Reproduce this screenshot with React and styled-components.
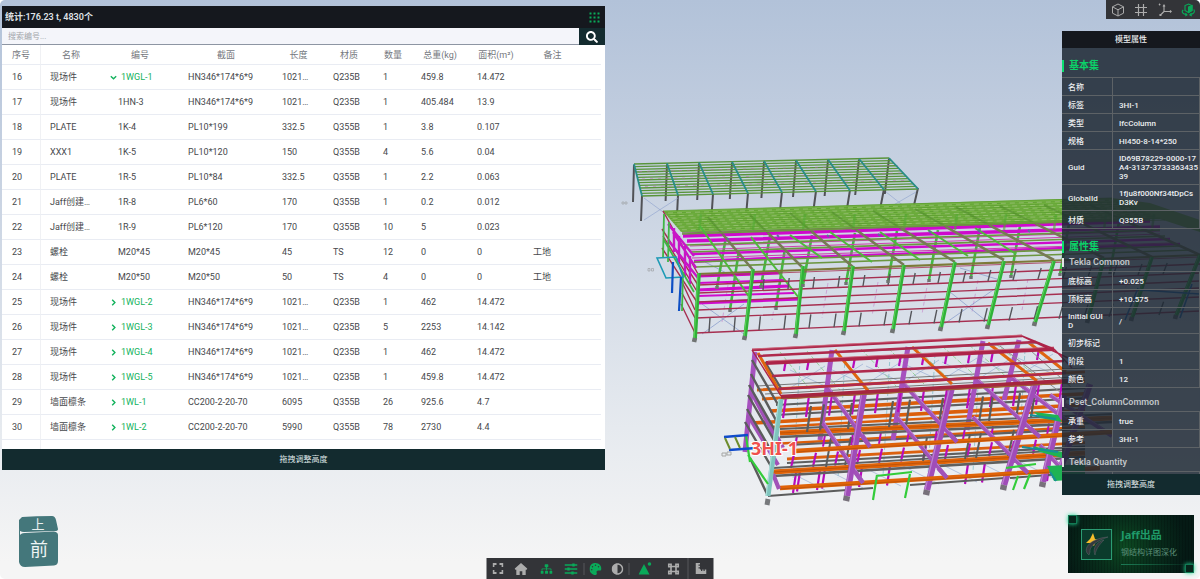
import React from 'react';
import styled, { createGlobalStyle } from 'styled-components';
import { FaHome, FaSitemap, FaPalette, FaAdjust, FaSearch, FaRulerCombined } from 'react-icons/fa';

const Global = createGlobalStyle`
  * { box-sizing: border-box; }
  body {
    margin: 0;
    background: #fff;
    font-family: Roboto, "Noto Sans CJK SC", sans-serif;
  }
  button { border: 0; padding: 0; margin: 0; font: inherit; cursor: pointer; }
`;

const GREEN = '#0aa959';

const Page = styled.div`
  position: relative;
  min-height: 100vh;
  overflow: hidden;
  border-radius: 5px;
  background: linear-gradient(#b2c2d9 0%, #c9d3e2 33%, #e6eaef 74%, #f5f5f5 97%);
`;
const SceneSvg = styled.svg`
  position: absolute;
  inset: 0;
  width: 100%;
  height: 100%;
`;
const Overlay = styled.div`
  position: relative;
  display: flex;
  justify-content: space-between;
  min-height: 100vh;
`;
const LeftColumn = styled.div`
  display: flex;
  flex-direction: column;
  flex: 0 0 50.25%;
  margin-left: 2px;
  padding: 6px 0 10px;
`;
const RightColumn = styled.aside`
  display: flex;
  flex-direction: column;
  align-items: flex-end;
  width: 138px;
`;

/* parts list */
const ListPanel = styled.section`
  background: #fff;
`;
const PanelBar = styled.header`
  display: flex;
  align-items: center;
  justify-content: space-between;
  height: 22px;
  padding: 0 5px 0 3px;
  background: #15181e;
`;
const Stats = styled.h1`
  margin: 0;
  font-size: 9px;
  line-height: 12px;
  font-weight: 600;
  color: #dfe1e5;
`;
const DotsButton = styled.button`
  display: flex;
  background: none;
`;
const SearchForm = styled.form`
  display: flex;
  height: 17px;
`;
const SearchInput = styled.input`
  flex: 1;
  min-width: 0;
  border: 0;
  border-bottom: 1px solid #8d95a3;
  padding: 2px 6px 0;
  background: #f4f5fa;
  font: 8px/12px Roboto, "Noto Sans CJK SC", sans-serif;
  outline: none;
  &::placeholder { color: #a3a5aa; }
`;
const SearchButton = styled.button`
  display: flex;
  align-items: center;
  justify-content: center;
  width: 26px;
  background: #132b2f;
  color: #fff;
  font-size: 12px;
`;
const ListScroll = styled.div`
  height: 404px;
  overflow: hidden;
  padding-right: 4px;
`;
const PartsTable = styled.table`
  width: 100%;
  table-layout: fixed;
  border-collapse: separate;
  border-spacing: 0;
  font-size: 9px;
  line-height: 12px;
  color: #46484c;
`;
const HeadCell = styled.th`
  height: 20px;
  padding: 0;
  border-bottom: 1px solid #e9ecf3;
  font-weight: 400;
  color: #75787e;
  text-align: center;
  white-space: nowrap;
  &:first-child { border-right: 1px solid #f0f1f4; }
`;
const Cell = styled.td`
  height: 25px;
  padding: 0 0 0 ${p => (p.$indent ? 17 : 9)}px;
  border-bottom: 1px solid #e9ecf3;
  white-space: nowrap;
  overflow: hidden;
  &:first-child { padding-left: 10px; border-right: 1px solid #f0f1f4; }
`;
const Assembly = styled.button`
  display: flex;
  align-items: center;
  gap: 4px;
  margin-left: -8px;
  background: none;
  color: #12b25c;
  font-size: 9px;
  line-height: 12px;
`;
const DragBar = styled.button`
  display: block;
  width: 100%;
  height: 21px;
  background: #132b2f;
  color: #dfe5e6;
  font-size: 8px;
  line-height: 21px;
  text-align: center;
`;
const CubeSvg = styled.svg`
  display: block;
  margin: auto 0 0 14px;
`;

/* tool bars */
const ViewTools = styled.nav`
  display: flex;
  align-items: center;
  justify-content: space-around;
  width: 94px;
  height: 19px;
  background: #333438;
`;
const ToolButton = styled.button`
  display: flex;
  align-items: center;
  justify-content: center;
  width: ${p => p.$w || 25}px;
  height: 100%;
  background: none;
  color: ${p => (p.$on ? GREEN : '#acacac')};
  font-size: 12px;
`;
const BottomTools = styled.nav`
  position: absolute;
  bottom: 0;
  left: 50%;
  transform: translateX(-50%);
  display: flex;
  align-items: center;
  height: 21px;
  background: #333438;
`;
const Divider = styled.span`
  width: 1px;
  height: ${p => (p.$full ? 21 : 12)}px;
  background: #56575b;
`;

/* model properties */
const PropPanel = styled.section`
  width: 100%;
  margin-top: 12px;
  background: rgba(28, 39, 50, 0.85);
  color: #eceef0;
`;
const PropTitle = styled.h2`
  margin: 0;
  height: 17px;
  background: #15181e;
  font-size: 8px;
  line-height: 18px;
  font-weight: 500;
  text-align: center;
`;
const PropScroll = styled.div`
  height: 426px;
  overflow: hidden;
`;
const SetHeading = styled.h3`
  margin: 12px 0 5px;
  border-left: 2px solid #0be070;
  padding-left: 5px;
  font-size: 10px;
  line-height: 12px;
  font-weight: 700;
  color: #0bd168;
`;
const GroupHeading = styled.h4`
  margin: ${p => (p.$first ? 3 : 10)}px 0 4px;
  border-left: 2px solid #e4e4e4;
  padding-left: 5px;
  font-size: 9px;
  line-height: 9px;
  font-weight: 600;
  color: #c0c4c8;
`;
const PropTable = styled.table`
  width: 100%;
  table-layout: fixed;
  border-collapse: separate;
  border-spacing: 0;
  border-top: 1px solid #5d6266;
  font-size: 8px;
  line-height: 9px;
  font-weight: 500;
  word-break: break-all;
`;
const PropLabel = styled.th`
  width: 51px;
  height: 18px;
  padding: 4px 6px 3px;
  border-right: 1px solid #5d6266;
  border-bottom: 1px solid #5d6266;
  font-weight: 500;
  text-align: left;
`;
const PropValue = styled.td`
  height: 18px;
  padding: 4px 1px 3px 6px;
  border-right: 1px solid #5d6266;
  border-bottom: 1px solid #5d6266;
`;

/* brand card */
const BrandCard = styled.a`
  position: relative;
  display: flex;
  align-items: center;
  gap: 9px;
  width: 126px;
  height: 58px;
  margin: auto 6px 6px 0;
  padding-left: 13px;
  text-decoration: none;
  background:
    repeating-linear-gradient(90deg, rgba(0, 0, 0, 0.16) 0 1px, transparent 1px 3px),
    radial-gradient(circle at 45% 55%, #0d4a22 0%, #08301c 35%, #051a15 80%);
`;
const Corner = styled.i`
  position: absolute;
  width: 9px;
  height: 9px;
  border: 1px solid #127a55;
  background: #06251b;
  box-shadow: 0 0 4px #1fdc95;
  ${p => (p.$end ? 'right: 0; bottom: 0;' : 'left: 0; top: 0;')}
`;
const BrandText = styled.div`
  flex: 1;
  padding-top: 3px;
  font-family: "Noto Sans", "Noto Sans CJK SC", sans-serif;
`;
const BrandName = styled.strong`
  display: block;
  font-size: 11px;
  line-height: 16px;
  color: #1f9a69;
`;
const BrandSub = styled.span`
  display: block;
  margin-top: 3px;
  font-size: 8px;
  line-height: 12px;
  color: #5c9079;
  white-space: nowrap;
`;
const BrandLine = styled.span`
  display: block;
  height: 1px;
  margin-top: 6px;
  background: linear-gradient(90deg, #1c7a55, transparent);
`;

const columns = [39, 60, 78, 94, 51, 50, 38, 56, 56, 57];
const heads = ['序号', '名称', '编号', '截面', '长度', '材质', '数量', '总重(kg)', '面积(m²)', '备注'];
const rows = [
  ['16', '现场件', '1WGL-1', 'HN346*174*6*9', '1021…', 'Q235B', '1', '459.8', '14.472', '', 'open'],
  ['17', '现场件', '1HN-3', 'HN346*174*6*9', '1021…', 'Q235B', '1', '405.484', '13.9', ''],
  ['18', 'PLATE', '1K-4', 'PL10*199', '332.5', 'Q355B', '1', '3.8', '0.107', ''],
  ['19', 'XXX1', '1K-5', 'PL10*120', '150', 'Q355B', '4', '5.6', '0.04', ''],
  ['20', 'PLATE', '1R-5', 'PL10*84', '332.5', 'Q355B', '1', '2.2', '0.063', ''],
  ['21', 'Jaff创建…', '1R-8', 'PL6*60', '170', 'Q355B', '1', '0.2', '0.012', ''],
  ['22', 'Jaff创建…', '1R-9', 'PL6*120', '170', 'Q355B', '10', '5', '0.023', ''],
  ['23', '螺栓', 'M20*45', 'M20*45', '45', 'TS', '12', '0', '0', '工地'],
  ['24', '螺栓', 'M20*50', 'M20*50', '50', 'TS', '4', '0', '0', '工地'],
  ['25', '现场件', '1WGL-2', 'HN346*174*6*9', '1021…', 'Q235B', '1', '462', '14.472', '', 'shut'],
  ['26', '现场件', '1WGL-3', 'HN346*174*6*9', '1021…', 'Q235B', '5', '2253', '14.142', '', 'shut'],
  ['27', '现场件', '1WGL-4', 'HN346*174*6*9', '1021…', 'Q235B', '1', '462', '14.472', '', 'shut'],
  ['28', '现场件', '1WGL-5', 'HN346*174*6*9', '1021…', 'Q235B', '1', '459.8', '14.472', '', 'shut'],
  ['29', '墙面檩条', '1WL-1', 'CC200-2-20-70', '6095', 'Q355B', '26', '925.6', '4.7', '', 'shut'],
  ['30', '墙面檩条', '1WL-2', 'CC200-2-20-70', '5990', 'Q355B', '78', '2730', '4.4', '', 'shut'],
  ['', '', '', '', '', '', '', '', '', ''],
];

const basic = [
  ['名称', ''], ['标签', '3HI-1'], ['类型', 'IfcColumn'], ['规格', 'HI450-8-14*250'],
  ['Guid', 'ID69B78229-0000-17A4-3137-373336343539'],
  ['GlobalId', '1fju8f000Nf34tDpCsD3Kv'], ['材质', 'Q355B'],
];
const tekla = [
  ['底标高', '+0.025'], ['顶标高', '+10.575'], ['Initial GUID', '/'],
  ['初步标记', ''], ['阶段', '1'], ['颜色', '12'],
];
const pset = [['承重', 'true'], ['参考', '3HI-1']];
const quantity = [['', '']];

const seq = n => Array.from({ length: n }, (_, i) => i);
const mix = (a, b, t) => a + (b - a) * t;

/* One stroked path out of many [x1, y1, x2, y2] members. */
function Members({ at, color, w = 1, ...rest }) {
  return (
    <path
      d={at.map(([a, b, c, d]) => `M${a} ${b}L${c} ${d}`).join('')}
      stroke={color}
      strokeWidth={w}
      fill="none"
      {...rest}
    />
  );
}

function Canopy() {
  const far = [634, 667, 699, 732, 764, 796, 828, 859, 889];
  const near = [642, 678, 713, 748, 782, 816, 850, 884, 918];
  return (
    <g>
      <Members color="#515256" w={2} at={far.map((x, i) => [x, 165 - i * 0.8, x - 1 - i * 0.4, 202 - i])} />
      <Members color="#515256" w={2} at={near.map((x, i) => [x, 196 - i, x - 1 - i * 0.4, i === 0 ? 221 : 226 - i * 2.5])} />
      <Members color="#8c9fcd" w={0.6} at={[[644, 198, 674, 220], [678, 198, 644, 220], [886, 192, 914, 214], [916, 192, 878, 214]]} />
      <Members
        color="#58943a" w={1.3}
        at={seq(13).map(i => { const t = i / 12; return [mix(634, 642, t), mix(164, 196, t), mix(889, 918, t), mix(158, 189, t)]; })}
      />
      <Members color="#b76aa8" w={0.5} strokeDasharray="3 5" at={[3, 6, 9].map(i => [636 + i, 164 + i * 2.5, 895 + i, 158 + i * 2.5])} />
      <Members color="#2a8d88" w={1.8} at={far.map((x, i) => [x, 164 - i * 0.75, near[i], 196 - i * 0.9])} />
    </g>
  );
}

function Hall() {
  const cols = [[699, 273, 695, 339], [753, 269, 745, 337], [803, 266, 796, 335], [853, 266, 844, 332], [904, 265, 893, 330],
    [955, 262, 941, 328], [1004, 261, 988, 326], [1054, 261, 1035, 323], [1104, 258, 1088, 320], [1152, 257, 1132, 318], [1200, 255, 1176, 316]];
  const rafters = [[708, 217, 753, 270], [750, 215, 803, 268], [790, 213, 853, 267], [832, 212, 904, 265],
    [873, 211, 955, 262], [915, 209, 1004, 260], [956, 207, 1054, 260], [1000, 206, 1104, 258], [1044, 205, 1152, 257], [1090, 205, 1200, 255]];
  const lowerRafters = rafters.map(([a, b, c, d]) => [mix(a, c, 0.34), mix(b, d, 0.34), c, d]);
  const farFeet = [[717, 287], [761, 286], [803, 285], [846, 283], [888, 281], [929, 280], [971, 277], [1011, 276], [1060, 274], [1110, 272]];
  const midFeet = [[730, 310], [776, 308]];
  const girts = [[285, 264], [293, 273], [302, 281], [310, 288], [318, 297], [333, 311]];
  return (
    <g>
      <Members color="#c47fca" w={0.6} strokeDasharray="4 3" at={seq(9).map(i => [728 + i * 50, 285 - i, 722 + i * 50, 322 - i * 2])} />
      <Members color="#748bc4" w={0.6} at={[[702, 304, 744, 334], [744, 304, 702, 334], [950, 292, 990, 324], [996, 288, 944, 324], [705, 262, 740, 280], [960, 268, 1000, 280]]} />
      <Members color="#43b843" w={2.6} at={farFeet.map(([x, y]) => [x + 9, y - 50, x, y])} />
      <Members color="#43b843" w={2.6} at={midFeet.map(([x, y]) => [x + 9, y - 60, x, y])} />
      <Members color="#ce0acc" w={3.4} at={[[683, 236, 1150, 221], [687, 241, 1160, 227]]} />
      <Members color="#ce0acc" w={2.4} at={[[692, 254, 1170, 239], [694, 261, 1180, 244]]} />
      <Members color="#cb3fae" w={1} at={[[690, 246, 1160, 231], [690, 250, 1160, 234], [692, 258, 1170, 243]]} />
      <Members color="#cf0bcd" w={3.2} at={[[698, 276, 779, 273], [697, 290, 790, 286], [698, 303, 800, 299]]} />
      <Members color="#cf0bcd" w={2} at={[[694, 262, 767, 258], [698, 283, 784, 280], [697, 296, 794, 293]]} />
      <path d="M663 211L1062 199L1112 198L1150 203L1200 220L1200 232L1160 219L1062 222L681 232Z" fill="#72b33c" fillOpacity=".95" />
      <Members
        color="#5b9c30" w={0.8}
        at={seq(12).map(i => { const t = i / 11; return [mix(663, 682, t), mix(211, 232, t), mix(1112, 1165, t), mix(198, 220, t)]; })}
      />
      <Members color="#d7e0c4" w={0.5} strokeDasharray="5 4" strokeOpacity=".7" at={seq(7).map(i => [668 + i * 2.3, 213 + i * 2.8, 1118 + i * 5, 200 + i * 2.8])} />
      <Members color="#4f8a2a" w={2} strokeOpacity=".55" at={rafters.map(([a, b, c, d]) => [a, b, mix(a, c, 0.36), mix(b, d, 0.36)])} />
      <Members color="#52a832" w={2.4} strokeOpacity=".6" at={cols.map(([a]) => [a + 2, 214, a, 230])} />
      <Members color="#6f5240" w={0.8} at={[[682, 233, 1062, 222]]} />
      <Members color="#6c9640" w={1.7} at={[[682, 234, 1150, 219], [686, 245, 1160, 230], [690, 252, 1165, 236], [694, 262, 1180, 246], [696, 267, 1190, 250]]} />
      <Members color="#777a55" w={2.6} at={lowerRafters} />
      <Members color="#4fb83c" w={2} at={[[700, 226, 750, 298], [751, 237, 799, 298], [790, 235, 822, 258], [830, 232, 872, 262], [880, 232, 920, 260], [928, 230, 968, 256], [975, 228, 1016, 254]]} />
      <Members color="#a62f50" w={1.4} at={girts.map(([a, b], i) => [698 - (i > 3 ? 2 : 0), a, 1200, b])} />
      <Members color="#7c7a38" w={2} at={[[697, 274, 1200, 255]]} />
      <Members color="#a62f50" w={0.8} at={[[697, 276, 1200, 257]]} />
      <Members color="#a62f50" w={1.4} at={[[663, 211, 698, 274], [662, 229, 698, 285], [663, 236, 698, 293], [662, 248, 697, 302], [682, 282, 695, 310], [682, 293, 695, 318], [681, 304, 695, 333]]} />
      <Members color="#c815c6" w={2.4} at={[[674, 228, 674, 252], [679, 236, 679, 262], [685, 246, 685, 276], [690, 256, 690, 284], [668, 224, 694, 256], [668, 240, 698, 278], [673, 232, 696, 268]]} />
      <Members color="#40b646" w={1.8} at={[[664, 214, 663, 258], [669, 222, 668, 262], [683, 272, 682, 311], [664, 240, 694, 292]]} />
      <Members color="#54555a" w={1.4} at={seq(19).map(i => [710 + i * 25.2, 318 - i * 0.9, 709 + i * 25, 332 - i * 0.95])} />
      <Members color="#54555a" w={1.4} at={seq(17).map(i => [764 + i * 25.2, 279 - i, 763 + i * 25, 290 - i])} />
      <Members color="#2fb238" w={3.8} at={cols} />
      <Members color="#5fd35c" w={1} at={cols.map(([a, b, c, d]) => [a - 1, b, c - 1, d])} />
      <Members color="#6f7372" w={4.6} at={cols.map(([, , c, d]) => [c, d - 1, c - 1, d + 3])} />
      <Members color="#6f7372" w={3.4} at={[...farFeet, ...midFeet].map(([x, y]) => [x, y - 1, x, y + 2])} />
      <path d="M657 258L676 257L683 277L666 278Z" fill="none" stroke="#1d9ab5" strokeWidth="1.6" />
      <Members color="#0e4fc4" w={2.2} at={[[673, 262, 672, 293], [681, 277, 679, 311]]} />
      <Members color="#1d6fc4" w={1.6} at={[[1138, 288, 1125, 320], [1192, 284, 1180, 318], [1140, 290, 1200, 294]]} />
      <Members color="#5d6f9a" w={1.8} at={cols.slice(1, 8).map(([a, b]) => [a - 26, b - 31, a - 24, b - 29])} />
      <path d="M622 202h2v2h-2zM625 202h2v2h-2zM648 268.500h2v2.500h-2zM651.500 268.500h2v2.500h-2z" fill="none" stroke="#a0a3a6" strokeWidth=".7" />
    </g>
  );
}

function Frame() {
  const run = (x1, y, x2 = 1085) => [x1, y, x2, y - (x2 - x1) * 0.055];
  const nearCols = [[864, 392, 847, 496], [952, 387, 927, 490], [1035, 383, 1004, 485], [1064, 395, 1043, 482], [1090, 384, 1060, 470]];
  const diagonals = [[827, 387, 870, 447], [823, 423, 863, 483], [902, 382, 957, 442], [897, 417, 947, 478], [977, 380, 1040, 437],
    [973, 417, 1028, 473], [1012, 378, 1066, 420], [1040, 445, 1070, 478], [1050, 395, 1112, 436]];
  const f1 = [[780, 433, 1112, 418]];
  const f3 = [[773, 472, 1085, 453]];
  const f2 = [[795, 451, 1112, 432]];
  const f4 = [[780, 488, 1100, 468]];
  const shift = (set, dy) => set.map(([a, b, c, d]) => [a, b + dy, c, d + dy]);
  return (
    <g>
      <Members color="#8ea4cf" w={0.6} at={seq(7).flatMap(i => [[790 + i * 38, 370 - i * 2, 825 + i * 38, 386 - i * 2], [825 + i * 38, 366 - i * 2, 790 + i * 38, 388 - i * 2], [785 + i * 38, 470 - i * 2, 825 + i * 38, 490 - i * 2]])} />
      <Members color="#78c878" w={0.7} strokeDasharray="5 2" at={seq(9).map(i => [780 + i * 27, 352 - i, 812 + i * 28, 392 - i * 2])} />
      <Members color="#79b9c4" w={0.7} strokeDasharray="4 2" at={seq(6).map(i => [800 + i * 45, 360 - i * 2, 793 + i * 45, 480 - i * 2])} />
      <Members color="#b80cba" w={2.2} at={seq(12).map(i => [786 + i * 23, 360 - i, 784 + i * 23, 371 - i])} />
      <Members color="#777" w={1} at={[run(757, 386), run(765, 394)]} />
      <Members color="#db6110" w={2.8} at={[run(757, 390), run(762, 399), run(787, 459)]} />
      <Members color="#db5e0b" w={3.6} at={[run(770, 411), run(752, 423)]} />
      <Members color="#db5e0b" w={2.4} at={[run(772, 444), run(772, 427)]} />
      <Members color="#5f6060" w={2.2} at={[run(776, 405), run(776, 415), run(787, 463), run(790, 445)]} />
      <Members color="#a651bf" w={5} at={[[755, 352, 745, 452], [832, 350, 820, 440], [908, 347, 893, 440], [983, 341, 967, 430], [1019, 340, 1004, 400]]} />
      <Members color="#b80cba" w={2.2} at={seq(13).map(i => [786 + i * 23, 397 - i * 1.2, 783 + i * 23, 418 - i * 1.2])} />
      <Members color="#b80cba" w={2} at={seq(10).map(i => [797 + i * 28, 436 - i * 1.4, 795 + i * 28, 448 - i * 1.4])} />
      <Members color="#b80cba" w={2.2} at={seq(12).map(i => [794 + i * 22, 454 - i * 1.3, 791 + i * 22, 468 - i * 1.3])} />
      <Members color="#b80cba" w={2.2} at={[796, 800, 820, 825, 862, 890, 968, 985, 1050].map((x, i) => [x, 473 - i * 1.5, x - 3, 493 - i * 1.5])} />
      <Members color="#e06308" w={5} at={[...f1, ...f3]} />
      <Members color="#b5510b" w={0.8} at={[...f1, ...f3]} />
      <Members color="#5f6060" w={2.6} at={[...shift(f1, 4), ...shift(f3, 4)]} />
      <Members color="#5f6060" w={1.8} at={[...shift(f3, -4), ...shift(f1, -4)]} />
      <Members color="#5b5c5c" w={2} at={[[768, 496, 873, 488], [910, 485, 1005, 478], [1010, 478, 1062, 474]]} />
      <Members color="#5b5c5c" w={2.2} at={[811, 824, 852, 893, 910, 943, 983, 993, 1020, 1035].map((x, i) => [x, 406 - i * 1.6, x - 4, 432 - i * 1.6])} />
      <Members color="#5b5c5c" w={2} at={[[831, 438, 826, 467], [851, 437, 845, 465], [927, 437, 923, 461], [970, 434, 965, 459], [981, 433, 976, 458], [1014, 430, 1008, 456]]} />
      <Members color="#a152b8" w={4.2} at={[...diagonals, [752, 393, 780, 446], [748, 415, 778, 465]]} />
      <Members color="#bd80d2" w={1} at={diagonals.map(([a, b, c, d]) => [a + 1, b - 1, c + 1, d - 1])} />
      <Members color="#5b5c5c" w={2.4} at={[[752, 360, 780, 408], [751, 374, 778, 424], [749, 385, 777, 434], [748, 395, 775, 442], [747, 409, 773, 454], [745, 422, 772, 468], [750, 458, 767, 494], [765, 362, 782, 390]]} />
      <Members color="#a04cb9" w={6.4} at={nearCols} />
      <Members color="#bb82cf" w={1.2} at={nearCols.map(([a, b, c, d]) => [a - 2, b, c - 2, d])} />
      <Members color="#77717b" w={6.4} at={nearCols.slice(0, 4).map(([, , c, d]) => [c, d, c - 1, d + 5])} />
      <Members color="#e06308" w={4.4} at={[...f2, ...f4]} />
      <Members color="#b5510b" w={0.8} at={[...shift(f2, 1), ...shift(f4, 1)]} />
      <Members color="#a152b8" w={4.2} at={[[862, 435, 870, 447], [855, 472, 863, 483], [949, 433, 957, 442], [938, 468, 947, 478], [1030, 428, 1040, 437], [1019, 465, 1028, 473], [773, 474, 779, 489], [777, 437, 783, 448]]} />
      <Members color="#df6410" w={3} at={[[758, 353, 781, 394], [835, 350, 869, 392], [912, 347, 952, 384], [988, 343, 1037, 381], [1028, 342, 1066, 372]]} />
      <Members color="#8b8b8b" w={1} at={[[760, 356, 1040, 343], [1000, 346, 1060, 392], [1030, 350, 1072, 388]]} />
      <Members color="#af2a4d" w={2.6} at={[[752, 350, 1022, 336], [758, 356, 1036, 342], [772, 376, 1064, 361], [778, 389, 1066, 373]]} />
      <Members color="#ad2448" w={3.8} at={[[766, 363, 1054, 349]]} />
      <Members color="#a5263f" w={4.4} at={[[781, 397, 1070, 381]]} />
      <Members color="#9a6238" w={1.2} at={[[781, 399, 1070, 383]]} />
      <Members color="#cf6d80" w={0.8} at={[[768, 361, 1054, 347], [752, 349, 1022, 335]]} />
      <Members color="#ad2448" w={1.4} at={[[1022, 336, 1054, 349], [1054, 349, 1072, 368], [752, 350, 781, 396], [1022, 336, 1068, 358]]} />
      <Members color="#7fc4bd" w={5} at={[[781, 399, 768, 496]]} />
      <Members color="#a9ded8" w={1.2} at={[[779, 399, 766, 496]]} />
      <Members color="#77797c" w={5} at={[[768, 499, 767, 505]]} />
      <Members color="#32cc3a" w={2.2} at={[[876, 476, 912, 472], [877, 475, 873, 500], [910, 474, 905, 498], [748, 455, 768, 484], [746, 436, 750, 462], [1006, 468, 1036, 464], [1018, 476, 1013, 490], [1030, 474, 1024, 489]]} />
      <path d="M1034 412L1058 415L1062 422L1040 418ZM1032 446L1062 452L1062 458L1040 452ZM1047 466L1085 464L1085 479L1054 481Z" fill="#1fb354" />
      <path d="M1030 415L1056 419M1022 447L1058 452M1050 472L1056 481" stroke="#178f98" strokeWidth="2" fill="none" />
      <Members color="#0f4bcc" w={2.6} at={[[724, 437, 748, 435], [729, 450, 756, 448]]} />
      <Members color="#6d8d2e" w={2} at={[[725, 438, 730, 449], [735, 437, 740, 448]]} />
      <path d="M722 453h4v3h-4zM727 452h4v3h-4z" fill="none" stroke="#a5a6a4" />
    </g>
  );
}

function Scene() {
  return (
    <SceneSvg viewBox="0 0 1200 579" preserveAspectRatio="xMidYMid slice" aria-label="模型">
      <Canopy />
      <Hall />
      <Frame />
      <text
        x="751" y="455" fontFamily='"Noto Sans", sans-serif' fontSize="18" fontWeight="700"
        fill="#f0504d" stroke="#fff" strokeWidth="2" paintOrder="stroke"
      >3HI-1</text>
    </SceneSvg>
  );
}

function Chevron({ open }) {
  return (
    <svg width="7" height="7" viewBox="0 0 7 7" fill="none" stroke="currentColor" strokeWidth="1.4">
      <path d={open ? 'M.8 2.3L3.5 4.8L6.2 2.3' : 'M2.2.8L4.9 3.5L2.2 6.2'} />
    </svg>
  );
}

function Props({ items }) {
  return (
    <PropTable>
      <tbody>
        {items.map(([k, v]) => (
          <tr key={k}><PropLabel scope="row">{k}</PropLabel><PropValue>{v}</PropValue></tr>
        ))}
      </tbody>
    </PropTable>
  );
}

const line = { fill: 'none', stroke: 'currentColor' };

function ViewCube() {
  return (
    <CubeSvg width="46" height="54" viewBox="0 0 46 54" aria-label="视图方块">
      <path d="M3 5L6 2Q20 1 36 1Q39 1 40 5L42 14Q42 16 39 16L8 17Q3 17 3 13Z" fill="#44777b" />
      <path d="M3 4L4 16V46L5 50Q3 46 3 40Z" fill="#44777b" />
      <path d="M9 18L38 16.500Q42 17 42 20V46Q42 50 38 50.500L9 52Q4 52 3 47V22Q4 18 9 18Z" fill="#44777b" />
      <text x="22" y="14" fontSize="13" textAnchor="middle" fill="#e8efef">上</text>
      <text x="23" y="41" fontSize="18" textAnchor="middle" fill="#eef4f4">前</text>
    </CubeSvg>
  );
}

export default function App() {
  return (
    <>
      <Global />
      <Page>
        <Scene />
        <Overlay>
          <LeftColumn>
            <ListPanel>
              <PanelBar>
                <Stats>统计:176.23 t, 4830个</Stats>
                <DotsButton aria-label="菜单">
                  <svg width="11" height="11" viewBox="0 0 11 11" fill={GREEN}>
                    {seq(9).map(i => <rect key={i} x={(i % 3) * 4 + 0.5} y={Math.floor(i / 3) * 4 + 0.5} width="2" height="2" />)}
                  </svg>
                </DotsButton>
              </PanelBar>
              <SearchForm onSubmit={e => e.preventDefault()}>
                <SearchInput aria-label="搜索编号" placeholder="搜索编号..." />
                <SearchButton aria-label="搜索"><FaSearch /></SearchButton>
              </SearchForm>
              <ListScroll>
                <PartsTable>
                  <colgroup>
                    {columns.map((w, i) => <col key={i} width={w} />)}
                    <col />
                  </colgroup>
                  <thead>
                    <tr>{heads.map(h => <HeadCell key={h} scope="col">{h}</HeadCell>)}<HeadCell as="td" /></tr>
                  </thead>
                  <tbody>
                    {rows.map((r, n) => (
                      <tr key={n}>
                        {r.slice(0, 10).map((c, i) => (
                          <Cell key={i} $indent={i === 2}>
                            {i === 2 && r[10] ? <Assembly><Chevron open={r[10] === 'open'} />{c}</Assembly> : c}
                          </Cell>
                        ))}
                        <Cell />
                      </tr>
                    ))}
                  </tbody>
                </PartsTable>
              </ListScroll>
              <DragBar>拖拽调整高度</DragBar>
            </ListPanel>
            <ViewCube />
          </LeftColumn>

          <RightColumn>
            <ViewTools>
              <ToolButton $w={22} aria-label="方块">
                <svg width="14" height="14" viewBox="0 0 14 14" {...line} strokeLinejoin="round">
                  <path d="M7 1L12.500 3.800V10.200L7 13L1.500 10.200V3.800ZM1.500 3.800L7 6.800L12.500 3.800M7 6.800V13" />
                </svg>
              </ToolButton>
              <ToolButton $w={22} aria-label="网格">
                <svg width="14" height="14" viewBox="0 0 14 14" {...line} strokeWidth="1.2">
                  <path d="M4.500 1V13M9.500 1V13M1 4.500H13M1 9.500H13" />
                </svg>
              </ToolButton>
              <ToolButton $w={22} aria-label="坐标轴">
                <svg width="14" height="14" viewBox="0 0 14 14" {...line} strokeWidth="1.1">
                  <path d="M6 3V8.500H13M6 8.500L2 12.500M5 3.500L6 2L7 3.500M12 7.500L13.200 8.500L12 9.500M2 11V12.500H3.500M1 1l1.200 1.200M2.200 1L1 2.200" />
                </svg>
              </ToolButton>
              <ToolButton $w={22} $on aria-label="旋转">
                <svg width="14" height="14" viewBox="0 0 14 14" {...line} strokeWidth="1.1">
                  <path d="M7.500 1L11 2.500V7.500L7.500 9.500L4 7.500V2.500Z" />
                  <path d="M7.500 4L11 2.500V7.500L7.500 9.500Z" fill="currentColor" />
                  <path d="M2.200 7C0 9 2 11.200 5.500 11.800M12.800 6.500C14.500 9 12 11.200 9 11.800M4.500 10.200L6 11.800L4.200 13M10.500 10.200L8.800 11.800L10.800 13" />
                </svg>
              </ToolButton>
            </ViewTools>

            <PropPanel>
              <PropTitle>模型属性</PropTitle>
              <PropScroll>
                <SetHeading>基本集</SetHeading>
                <Props items={basic} />
                <SetHeading>属性集</SetHeading>
                <GroupHeading $first>Tekla Common</GroupHeading>
                <Props items={tekla} />
                <GroupHeading>Pset_ColumnCommon</GroupHeading>
                <Props items={pset} />
                <GroupHeading>Tekla Quantity</GroupHeading>
                <Props items={quantity} />
              </PropScroll>
              <DragBar>拖拽调整高度</DragBar>
            </PropPanel>

            <BrandCard href="#">
              <Corner /><Corner $end />
              <svg width="31" height="31" viewBox="0 0 31 31">
                <rect x=".5" y=".5" width="30" height="30" fill="#0b3b2c" stroke="#2b9c73" />
                <path d="M12 4L14 10L18 11L14 14L13 17L10 14L5 14L9 10Z" fill="#f5bd2c" />
                <path d="M8 26C0 20 10 9 27 8C15 12 8 18 9 23ZM14 26C11 19 16 13 23 11C18 16 15 20 14 26Z" fill="#33393d" stroke="#5c676b" strokeWidth=".5" />
              </svg>
              <BrandText>
                <BrandName>Jaff出品</BrandName>
                <BrandSub>钢结构详图深化</BrandSub>
                <BrandLine />
              </BrandText>
            </BrandCard>
          </RightColumn>
        </Overlay>

        <BottomTools>
          <ToolButton $w={22} aria-label="全屏">
            <svg width="11" height="11" viewBox="0 0 11 11" {...line} strokeWidth="1.800">
              <path d="M1 4V1H4M7 1H10V4M10 7V10H7M4 10H1V7" />
            </svg>
          </ToolButton>
          <ToolButton aria-label="主页">
            <svg width="13" height="12" viewBox="0 0 13 12" fill="currentColor">
              <path d="M6.500 0L13 5.800L12 6.800H11.200V12H7.800V8.200H5.200V12H1.800V6.800H1L0 5.800Z" />
            </svg>
          </ToolButton>
          <ToolButton $on aria-label="结构树"><FaSitemap /></ToolButton>
          <ToolButton $on aria-label="设置">
            <svg width="13" height="12" viewBox="0 0 13 12" {...line} strokeWidth="1.400">
              <path d="M0 2H13M0 6H13M0 10H13" />
              <path d="M9 .5V3.500M4 4.500V7.500M8 8.500V11.500" strokeWidth="2.400" />
            </svg>
          </ToolButton>
          <Divider />
          <ToolButton $w={22} $on aria-label="颜色"><FaPalette /></ToolButton>
          <ToolButton $w={22} aria-label="对比"><FaAdjust /></ToolButton>
          <Divider />
          <ToolButton $w={30} $on aria-label="标注">
            <svg width="13" height="13" viewBox="0 0 13 13" fill="currentColor">
              <path d="M5.500 2L11 12.500H0Z" /><circle cx="11" cy="2" r="1.800" />
            </svg>
          </ToolButton>
          <ToolButton $w={28} aria-label="节点">
            <svg width="12" height="12" viewBox="0 0 12 12" {...line} strokeWidth="1.600">
              <path d="M3.500 3.500H8.500V8.500H3.500Z" />
              <path d="M1.200 1.200h2.400v2.400H1.200zM8.400 1.200h2.400v2.400H8.400zM1.200 8.400h2.400v2.400H1.200zM8.400 8.400h2.400v2.400H8.400z" />
            </svg>
          </ToolButton>
          <Divider $full />
          <ToolButton aria-label="测量">
            <svg width="11" height="11" viewBox="0 0 11 11" fill="currentColor">
              <path d="M0 0H4.500V1.500H3V2.800H4.500V4.200H3V5.500H4.500V6.500H5.500V8H6.800V6.500H8V8H9.200V6.500H11V11H0Z" />
            </svg>
          </ToolButton>
        </BottomTools>
      </Page>
    </>
  );
}
